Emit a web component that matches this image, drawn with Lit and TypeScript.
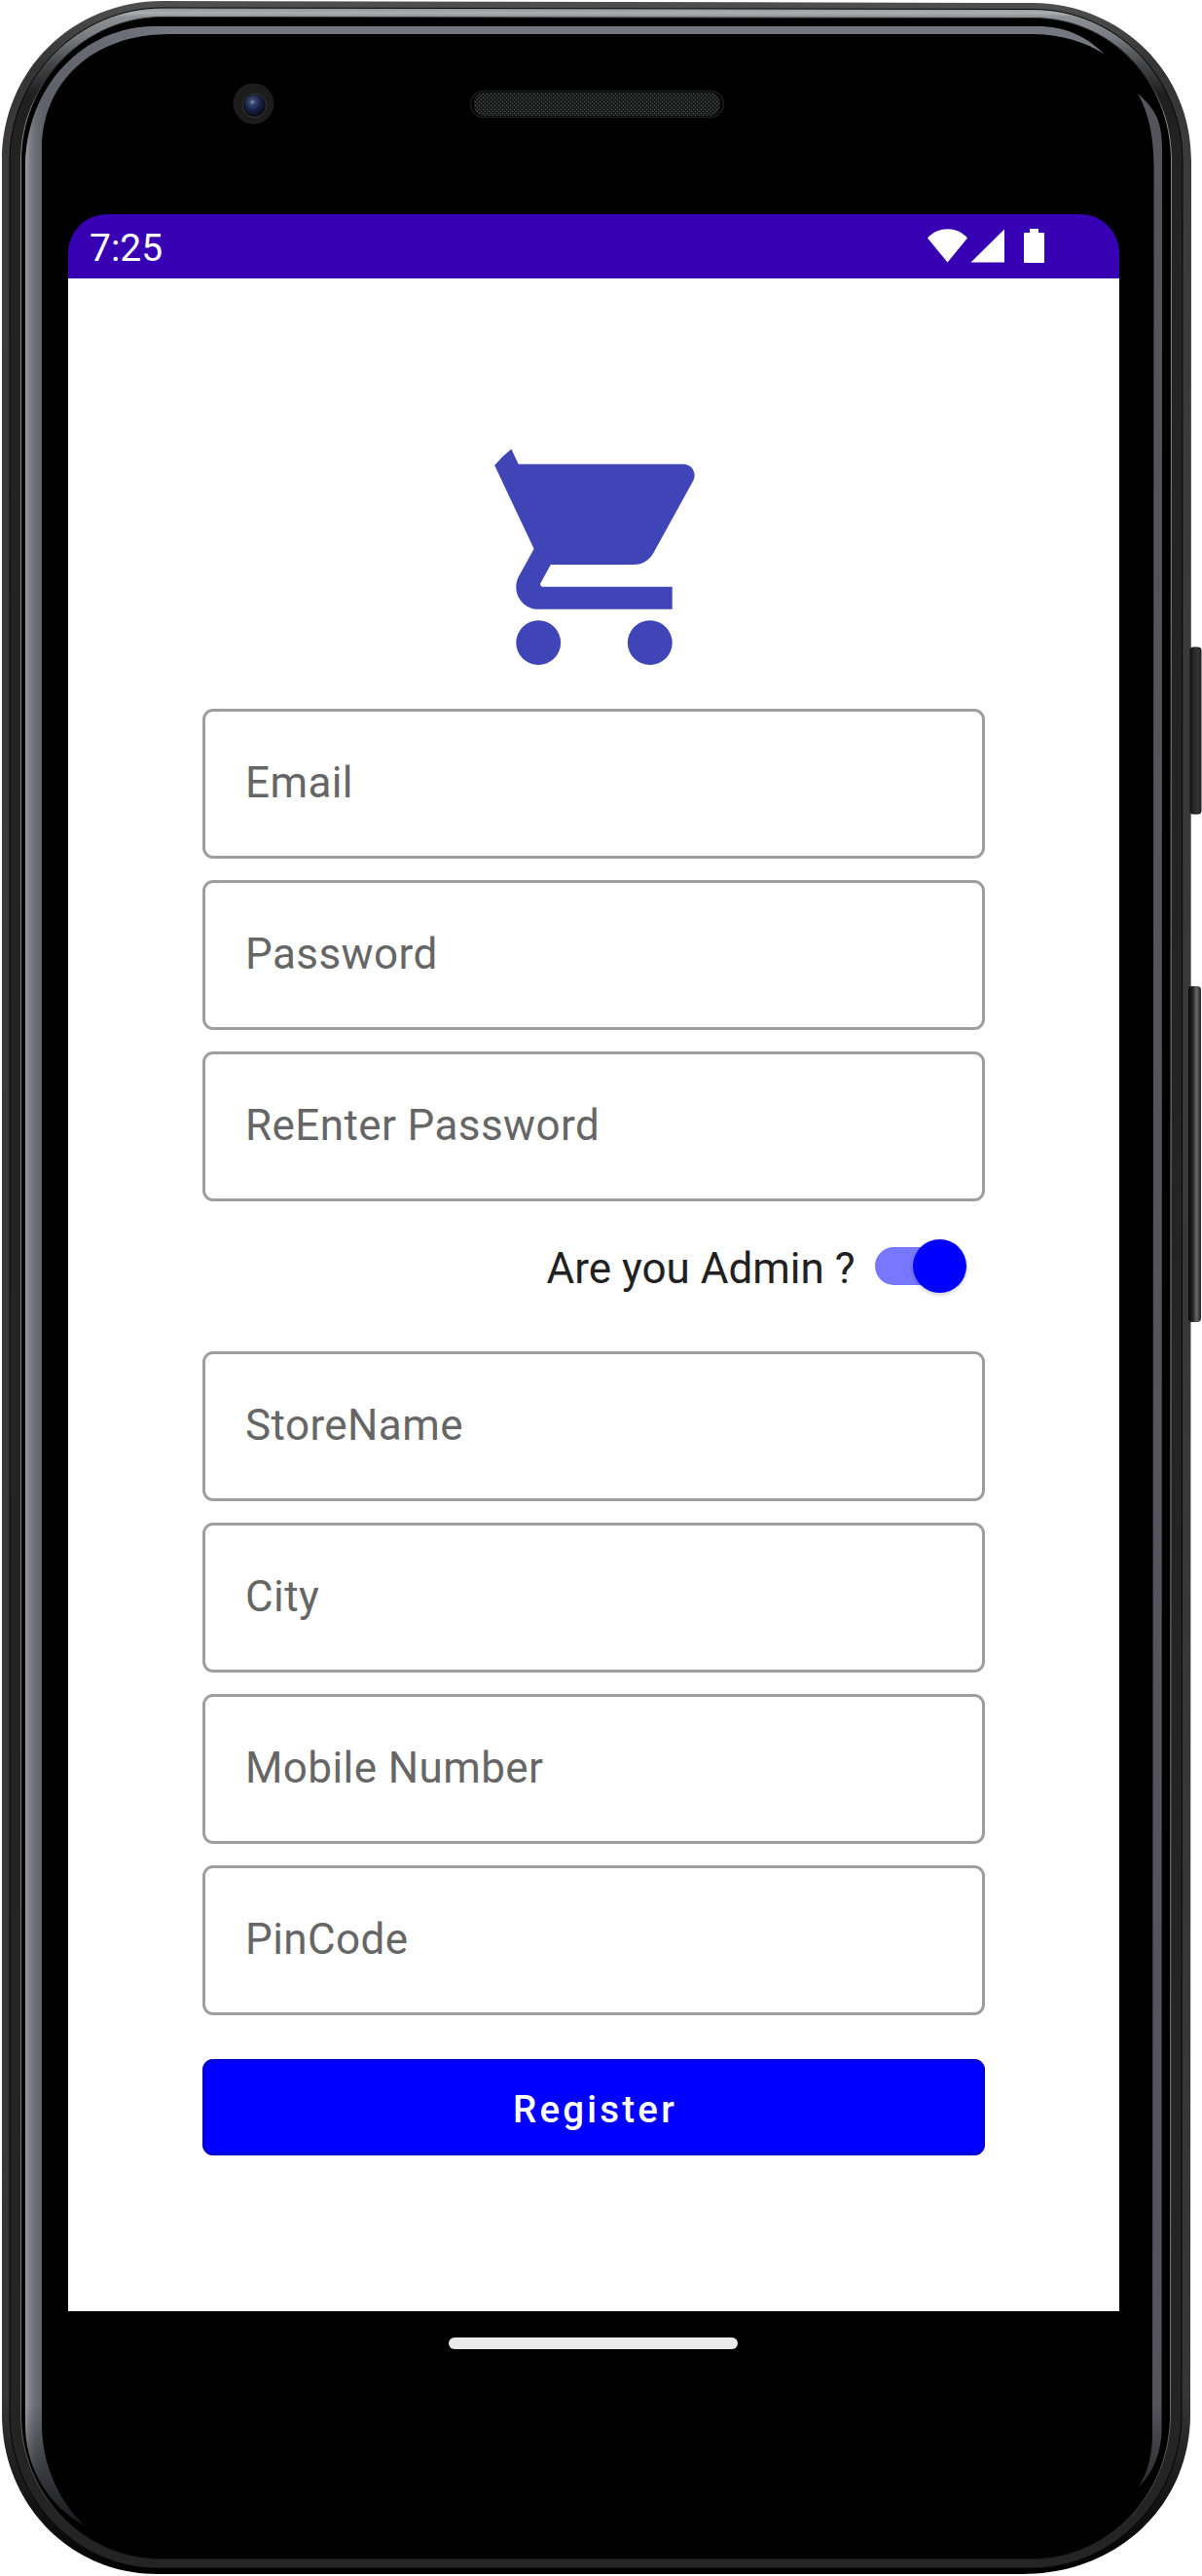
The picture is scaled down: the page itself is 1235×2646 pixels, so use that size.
import { LitElement, html, css } from "lit";
import { customElement, property } from "lit/decorators.js";

/** Outlined text field showing its hint. */
@customElement("outlined-field")
class OutlinedField extends LitElement {
  @property() label = "";
  static styles = css`
    :host { display: block; }
    .box {
      box-sizing: border-box;
      height: 154px;
      border: 3px solid #9e9e9e;
      border-radius: 11px;
      padding-left: 41px;
      display: flex;
      align-items: center;
      font: 400 44px/52px Roboto, sans-serif;
      letter-spacing: 0.41px;
      color: #666;
    }
    .hint { margin-top: -2px; }
  `;
  render() {
    return html`<div class="box"><span class="hint">${this.label}</span></div>`;
  }
}

/** Handset body drawn behind the screen. */
@customElement("device-frame")
class DeviceFrame extends LitElement {
  static styles = css`
    :host { display: block; }
    svg { display: block; }
  `;
  render() {
    return html`<svg width="1235" height="2646" viewBox="0 0 1235 2646">
      <defs>
        <linearGradient id="rim" x1="0" y1="0" x2="0" y2="2646" gradientUnits="userSpaceOnUse">
          <stop offset="0" stop-color="#505050" /><stop offset=".025" stop-color="#343434" />
          <stop offset=".06" stop-color="#3d3a3a" /><stop offset=".93" stop-color="#383535" />
          <stop offset=".97" stop-color="#151515" /><stop offset="1" stop-color="#000" />
        </linearGradient>
        <linearGradient id="band" x1="0" y1="8" x2="0" y2="2638" gradientUnits="userSpaceOnUse">
          <stop offset="0" stop-color="#8d8f92" /><stop offset=".002" stop-color="#acaeb2" />
          <stop offset=".0035" stop-color="#8f9196" /><stop offset=".012" stop-color="#777a80" />
          <stop offset=".022" stop-color="#444548" /><stop offset=".034" stop-color="#1f1f1f" />
          <stop offset=".06" stop-color="#232323" /><stop offset="1" stop-color="#242424" />
        </linearGradient>
        <linearGradient id="edge" x1="0" y1="17" x2="0" y2="2629" gradientUnits="userSpaceOnUse">
          <stop offset="0" stop-color="#222" /><stop offset=".025" stop-color="#333" />
          <stop offset=".04" stop-color="#888" /><stop offset=".93" stop-color="#777" />
          <stop offset=".975" stop-color="#444" /><stop offset="1" stop-color="#151515" />
        </linearGradient>
        <linearGradient id="shineX" x1="26" y1="0" x2="44" y2="0" gradientUnits="userSpaceOnUse">
          <stop offset="0" stop-color="#9b9da0" /><stop offset=".25" stop-color="#7d8085" />
          <stop offset=".6" stop-color="#686c73" /><stop offset="1" stop-color="#5f626a" />
        </linearGradient>
        <linearGradient id="shineTop" x1="50" y1="0" x2="180" y2="0" gradientUnits="userSpaceOnUse">
          <stop offset="0" stop-color="#74777f" stop-opacity="0" /><stop offset="1" stop-color="#74777f" />
        </linearGradient>
        <linearGradient id="fade" x1="0" y1="2470" x2="0" y2="2595" gradientUnits="userSpaceOnUse">
          <stop offset="0" stop-color="#000" stop-opacity="0" /><stop offset="1" stop-color="#000" stop-opacity=".75" />
        </linearGradient>
        <linearGradient id="key" x1="1222" y1="0" x2="1235" y2="0" gradientUnits="userSpaceOnUse">
          <stop offset="0" stop-color="#0a0a0a" /><stop offset=".3" stop-color="#262626" />
          <stop offset=".75" stop-color="#333" /><stop offset="1" stop-color="#161616" />
        </linearGradient>
        <linearGradient id="rocker" x1="1221" y1="0" x2="1235" y2="0" gradientUnits="userSpaceOnUse">
          <stop offset="0" stop-color="#050505" /><stop offset=".35" stop-color="#2a2a2a" />
          <stop offset=".6" stop-color="#686868" /><stop offset=".85" stop-color="#333" /><stop offset="1" stop-color="#0a0a0a" />
        </linearGradient>
        <radialGradient id="lens" cx=".4" cy=".35" r=".65">
          <stop offset="0" stop-color="#8b98bd" /><stop offset=".2" stop-color="#39476f" />
          <stop offset=".6" stop-color="#17224a" /><stop offset="1" stop-color="#0a0f20" />
        </radialGradient>
        <pattern id="mesh" width="4" height="4" patternUnits="userSpaceOnUse">
          <rect width="4" height="4" fill="#1e201f" />
          <rect width="1" height="1" fill="#565857" /><rect x="2" y="2" width="1" height="1" fill="#505251" />
          <rect x="2" width="1" height="1" fill="#0c0d0d" /><rect y="2" width="1" height="1" fill="#0c0d0d" />
        </pattern>
      </defs>
      <path fill="url(#rim)" d="M167 1L1062 3C1152 4 1224 74 1224 165L1223 2480C1223 2572 1150 2644 1050 2644H162C72 2644 2 2572 2 2480V165C2 72 75 1 167 1Z" />
      <rect x="1222.500" y="664.500" width="12" height="172" rx="4" fill="url(#key)" />
      <rect x="1221" y="1013" width="13" height="345" rx="4" fill="url(#rocker)" />
      <path fill="url(#band)" stroke="#050505" d="M167 8L1062 9.5C1147 10 1215 80 1215 165L1214 2480C1214 2566 1144 2638 1060 2638H162C78 2638 10 2566 10 2480V165C10 79 81 8 167 8Z" />
      <path stroke="url(#edge)" fill="#000" d="M167 17.5L1062 18.5C1140 18.5 1203.5 82 1203.5 165L1202.5 2480C1202.5 2562 1140 2628.500 1060 2628.500H165C85 2628.500 21.500 2562 21.500 2480V165C21.500 84 87 17.500 167 17.500Z" />
      <path fill="url(#shineX)" d="M1134 55C1115 37 1095 27 1062 27H160C86 27 26 88 26 173V2490C26 2540 55 2578 87 2594C60 2570 43 2530 43 2490V153C43 85 95 35 173 35H1062C1090 35 1115 43 1134 55Z" />
      <path fill="url(#shineTop)" d="M1134 55C1115 37 1095 27 1062 27H160C86 27 26 88 26 173H43V153C43 85 95 35 173 35H1062C1090 35 1115 43 1134 55Z" />
      <path fill="#54555c" d="M1169 96C1181 118 1185 140 1185.500 170L1184 2500C1184 2523 1178 2543 1169 2555C1184 2542 1193 2520 1193.500 2497L1194 150C1193 125 1189 114 1169 96Z" />
      <path fill="url(#fade)" d="M23 2470V2480C23 2562 85 2627 165 2627H1060C1140 2627 1201 2562 1201 2480V2470Z" />
      <circle cx="260.500" cy="106.500" r="21" fill="#1c1c1d" />
      <circle cx="261.500" cy="108.500" r="12" fill="#0b0b0d" stroke="#3a3b3e" />
      <circle cx="261.500" cy="108" r="10.500" fill="url(#lens)" />
      <rect x="483.500" y="93.500" width="260" height="27" rx="13.500" fill="#050505" stroke="#1b1c1d" stroke-width="1.500" />
      <rect x="487" y="95" width="253" height="24" rx="11" fill="url(#mesh)" />
    </svg>`;
  }
}

@customElement("app-root")
class AppRoot extends LitElement {
  static styles = css`
    :host { display: block; width: 1235px; height: 2646px; background: #fff; font-family: Roboto, sans-serif; }
    .device { position: relative; width: 1235px; height: 2646px; }
    .frame { position: absolute; inset: 0; }
    .phone { position: relative; box-sizing: border-box; padding: 220px 85px 0 70px; }
    .screen { height: 2154px; display: flex; flex-direction: column; }
    .status {
      box-sizing: border-box; height: 66px; background: #3700b3; color: #fff;
      border-radius: 40px 40px 0 0;
      padding: 0 77px 0 22px; display: flex; align-items: center; justify-content: space-between;
      font-size: 39px; line-height: 46px;
    }
    .clock { margin-top: 3px; }
    .icons { display: block; }
    .form { flex: 1; background: #fff; padding: 145px 138px 0; display: flex; flex-direction: column; }
    .cart { align-self: center; width: 275px; height: 275px; margin-bottom: 22px; }
    .fields { display: grid; gap: 22px; }
    .admin {
      height: 154px; display: flex; align-items: center; justify-content: flex-end;
      padding-right: 19px; box-sizing: border-box; padding-bottom: 22px;
      font-size: 44px; line-height: 52px; color: #212121; gap: 20.5px;
    }
    .question { padding-top: 5px; }
    .switch {
      width: 89px; height: 39px; border-radius: 20px; background: #7777ff;
      display: flex; align-items: center; justify-content: flex-end; margin-right: 5px;
    }
    .thumb {
      flex: none; width: 55px; height: 55px; margin-right: -5px; border-radius: 50%;
      background: #00f; box-shadow: 0 2px 4px rgba(0, 0, 0, .2);
    }
    .register {
      margin-top: 45px; height: 99px; border: 0; border-radius: 11px; padding: 5px 0 0 3px;
      background: #00f; color: #fff; box-shadow: inset 0 0 4px rgba(0, 0, 60, .7);
      font: 500 38.5px/46px Roboto, sans-serif; letter-spacing: 3.2px;
    }
    .nav { display: flex; justify-content: center; padding: 27px 2px 0 0; }
    .pill { width: 297px; height: 12px; border-radius: 6px; background: #ebebeb; }
  `;

  private first = ["Email", "Password", "ReEnter Password"];
  private second = ["StoreName", "City", "Mobile Number", "PinCode"];

  render() {
    const field = (l: string) => html`<outlined-field .label=${l}></outlined-field>`;
    return html`<div class="device">
      <device-frame class="frame"></device-frame>
      <div class="phone">
        <div class="screen">
          <div class="status">
            <span class="clock">7:25</span>
            <svg class="icons" width="120" height="36" viewBox="0 0 120 36" fill="#fff">
              <path d="M0 9.500C11 -2.800 30 -2.800 41 9.500L20.500 34.500Z" />
              <path d="M44.500 34.500L79 0.500V34.500Z" />
              <path d="M105 0H114V4H119Q120 4 120 5V34Q120 35 119 35H100Q99 35 99 34V5Q99 4 100 4H105Z" />
            </svg>
          </div>
          <div class="form">
            <svg class="cart" viewBox="0 0 24 24" fill="#3f44b7">
              <path d="M3.070 4.100Q3.720 3.300 4.570 2.640L5.210 4H20c.55 0 1 .45 1 1 0 .17-.05.34-.12.480l-3.580 6.490c-.34.610-.99 1.030-1.750 1.030H8.100l-.9 1.630-.03.120c0 .14.110.25.25.25H19v2H7c-1.100 0-2-.9-2-2 0-.35.09-.68.240-.96l1.360-2.450z" />
              <circle cx="7" cy="20" r="2" /><circle cx="17" cy="20" r="2" />
            </svg>
            <div class="fields">${this.first.map(field)}</div>
            <div class="admin"><span class="question">Are you Admin ?</span><div class="switch"><div class="thumb"></div></div></div>
            <div class="fields">${this.second.map(field)}</div>
            <button class="register">Register</button>
          </div>
        </div>
        <div class="nav"><div class="pill"></div></div>
      </div>
    </div>`;
  }
}
